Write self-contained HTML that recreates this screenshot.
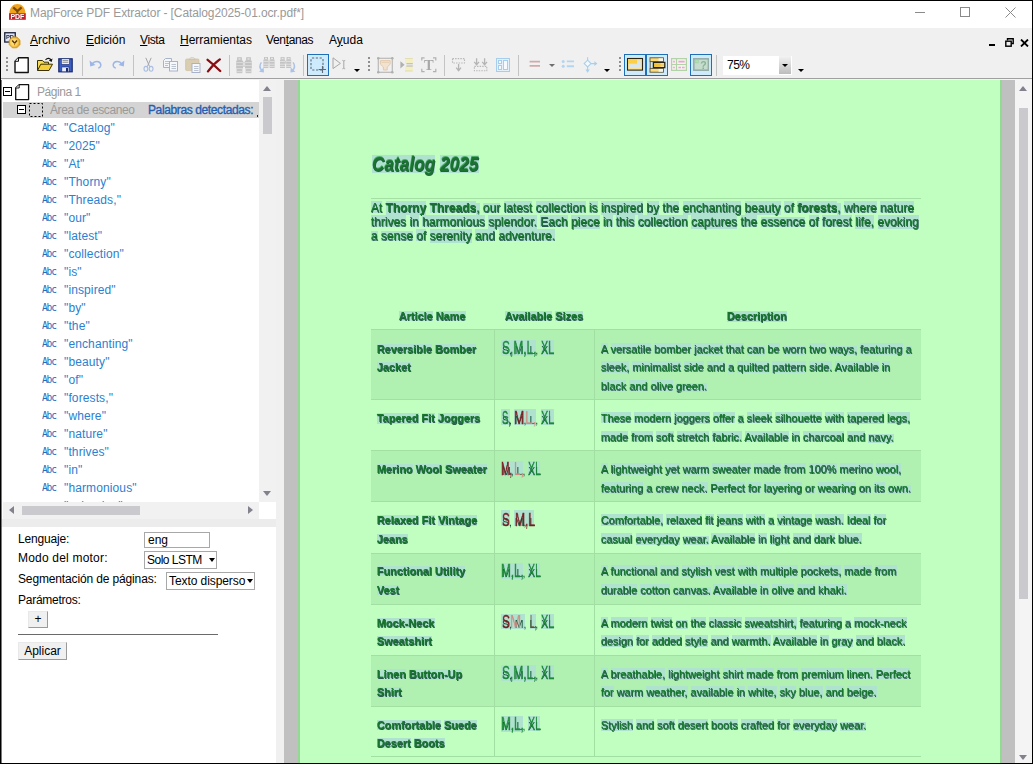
<!DOCTYPE html><html lang="es"><head><meta charset="utf-8"><title>MapForce PDF Extractor</title><style>
*{box-sizing:border-box;margin:0;padding:0}
html,body{width:1033px;height:764px;overflow:hidden;background:#fff}
body{font-family:"Liberation Sans","DejaVu Sans",sans-serif;font-size:12px;color:#000;position:relative}
.abs{position:absolute}
#frame{position:absolute;left:0;top:0;width:1033px;height:764px;border:1px solid #000;z-index:50;pointer-events:none}
#title{position:absolute;left:1px;top:1px;width:1031px;height:27px;background:#fff}
#title .t{position:absolute;left:29px;top:5px;font-size:12px;color:#999;white-space:pre;letter-spacing:-0.11px}
#menu{position:absolute;left:1px;top:28px;width:1031px;height:24px;background:#f0f0f0}
#menu .m{position:absolute;top:5px;font-size:12px;white-space:pre}
#menu u{text-decoration:underline;text-underline-offset:1px}
#tb{position:absolute;left:1px;top:52px;width:1031px;height:26px;background:#f0f0f0}
#tbline{position:absolute;left:1px;top:78px;width:1031px;height:1px;background:#a0a0a0}
#tbline2{position:absolute;left:1px;top:79px;width:1031px;height:1px;background:#f4f4f4}
.sep{position:absolute;top:55px;width:1px;height:21px;background:#c4c4c4}
.grip{position:absolute;top:57px;width:2px;height:16px;background:repeating-linear-gradient(transparent 0 0.5px,#8e8e8e 0.5px 2.2px,transparent 2.2px 4px)}
.btnon{position:absolute;top:54px;height:22px;background:#cdebfc;border:1px solid #1f6fb6}
.ico{position:absolute;will-change:transform}
.dd{position:absolute;width:0;height:0;border-left:3px solid transparent;border-right:3px solid transparent;border-top:3px solid #000}
#tree{position:absolute;left:2px;top:80px;width:257px;height:422px;background:#fff;overflow:hidden}
.row{position:absolute;left:0;height:18px;white-space:pre;font-size:12px;line-height:18px;margin-top:1px}
.w{color:#2b80d0;letter-spacing:0.12px}
#vs{position:absolute;left:259px;top:80px;width:17px;height:422px;background:#f1f1f1}
#hs{position:absolute;left:3px;top:502px;width:256px;height:17px;background:#f1f1f1}
.thumb{position:absolute;background:#c9c9ce}
#corner{position:absolute;left:259px;top:502px;width:17px;height:17px;background:#fff}
#split1{position:absolute;left:2px;top:519px;width:274px;height:8px;background:#ececec}
#props{position:absolute;left:2px;top:527px;width:274px;height:236px;background:#fff}
#props .l{position:absolute;left:16px;font-size:12px;white-space:pre;letter-spacing:0.1px}
.inp{position:absolute;border:1px solid #a8a8a8;background:#fff;font-size:12px;white-space:pre}
.btn{position:absolute;border:1px solid;border-color:#e8e8e8 #9a9a9a #9a9a9a #e8e8e8;background:#f0f0f0;font-size:12px;text-align:center;white-space:pre}
#vsplit{position:absolute;left:276px;top:80px;width:8px;height:683px;background:#f0f0f0}
#view{position:absolute;left:284px;top:80px;width:731px;height:683px;background:#c0c0c0;overflow:hidden}
#page{position:absolute;left:14px;top:0;width:704px;height:683px;background:#c0ffc0;border-left:2px solid #93d893;border-right:2px solid #93d893}
#rvs{position:absolute;left:1015px;top:80px;width:17px;height:683px;background:#f4f4f4}
.arr{position:absolute;width:0;height:0}
</style></head><body>
<div id="title"><svg class="abs" style="left:8px;top:2px;will-change:transform" width="17" height="18" viewBox="0 0 17 18"><path d="M0.4 10.6C0.4 -2.2 16.4 -2.2 16.4 10.6Z" fill="#f0a31c"/><path d="M4.2 4.4L8.4 8L12.6 4.4" fill="none" stroke="#7a4a0a" stroke-width="2.3"/><path d="M8.4 7.4V10.4" stroke="#7a4a0a" stroke-width="1.8"/><rect x="0" y="10.2" width="16.8" height="6.6" fill="#c6222a"/><text x="8.4" y="16.2" text-anchor="middle" font-family="Liberation Sans,sans-serif" font-size="7.4" font-weight="bold" fill="#fff" textLength="14" lengthAdjust="spacingAndGlyphs">PDF</text></svg><span class="t">MapForce PDF Extractor - [Catalog2025-01.ocr.pdf*]</span>
<div class="abs" style="left:914px;top:11px;width:10px;height:1px;background:#8a8a8a"></div>
<div class="abs" style="left:959px;top:6px;width:10px;height:10px;border:1px solid #8a8a8a"></div>
<svg class="abs" style="left:1004px;top:6px" width="11" height="11" viewBox="0 0 11 11"><path d="M0.5 0.5L10.5 10.5M10.5 0.5L0.5 10.5" stroke="#8a8a8a" stroke-width="1" fill="none"/></svg>
</div>
<div id="menu"><svg class="abs" style="left:3px;top:3px;will-change:transform" width="18" height="18" viewBox="0 0 18 18"><defs><radialGradient id="bg1" cx="0.45" cy="0.5" r="0.6"><stop offset="0" stop-color="#fff3b8"/><stop offset="0.55" stop-color="#f9cf58"/><stop offset="1" stop-color="#d68c0c"/></radialGradient></defs><rect x="0.75" y="1.75" width="10.5" height="9.3" fill="#dfe6fb" stroke="#1a2238" stroke-width="1.3"/><text x="2" y="7.6" font-family="Liberation Sans,sans-serif" font-size="5.8" font-weight="bold" fill="#1a2238">PD</text><path d="M8.4 6H12.8L16 9.2V13.6L12.8 16.8H8.4L5.2 13.6V9.2Z" fill="url(#bg1)" stroke="#d4900e" stroke-width="0.8"/><path d="M8.2 9.4L10.6 12.2L13 9.4" fill="none" stroke="#5e3606" stroke-width="1.5"/><path d="M10.6 12V14.2" stroke="#b8780a" stroke-width="1"/></svg>
<span class="m" style="left:29px"><u>A</u>rchivo</span>
<span class="m" style="left:85px"><u>E</u>dición</span>
<span class="m" style="left:139px"><span style="letter-spacing:-0.4px"><u>V</u>ista</span></span>
<span class="m" style="left:179px"><u>H</u>erramientas</span>
<span class="m" style="left:265px"><span style="letter-spacing:-0.35px">Ven<u>t</u>anas</span></span>
<span class="m" style="left:328px">A<u>y</u>uda</span>
<div class="abs" style="left:988px;top:16px;width:6px;height:2px;background:#000"></div>
<svg class="abs" style="left:1004px;top:10px" width="9" height="9" viewBox="0 0 9 9"><path d="M2.5 2.5V0.8H8.2V5.5H6.5" stroke="#000" stroke-width="1.4" fill="none"/><rect x="0.8" y="3.2" width="5.4" height="5" stroke="#000" stroke-width="1.4" fill="none"/></svg>
<svg class="abs" style="left:1019px;top:11px" width="9" height="8" viewBox="0 0 9 8"><path d="M1 0.5L8 7.5M8 0.5L1 7.5" stroke="#000" stroke-width="1.8" fill="none"/></svg>
</div>
<div id="tb"></div><div id="tbline"></div><div id="tbline2"></div>
<div class="grip" style="left:6px"></div>
<div class="grip" style="left:368px"></div>
<div class="grip" style="left:619px"></div>
<div class="sep" style="left:82px"></div>
<div class="sep" style="left:133px"></div>
<div class="sep" style="left:229px"></div>
<div class="sep" style="left:303px"></div>
<div class="sep" style="left:444px"></div>
<div class="sep" style="left:518px"></div>
<div class="sep" style="left:716px"></div>
<div class="btnon" style="left:307px;width:22px"></div>
<div class="btnon" style="left:624px;width:22px"></div>
<div class="btnon" style="left:646px;width:22px"></div>
<div class="btnon" style="left:690px;width:22px"></div>
<svg class="ico" style="left:14px;top:57px" width="16" height="17" viewBox="0 0 16 17"><path d="M4.5 0.8H14.2V15.5H1V4.3Z" fill="#fff" stroke="#111" stroke-width="1.4" stroke-linejoin="round"/><path d="M4.5 0.8V4.3H1" fill="#eee" stroke="#111" stroke-width="1"/></svg>
<svg class="ico" style="left:36px;top:57px" width="18" height="15" viewBox="0 0 18 15"><path d="M1.5 13.5V3.5H6.5L8 5.2H12.5V7" fill="#f6dc55" stroke="#3a3000" stroke-width="1"/><path d="M1.5 13.5L4.8 7.2H16.5L13 13.5Z" fill="#f3cf3a" stroke="#3a3000" stroke-width="1" stroke-linejoin="round"/><path d="M9.5 2.8C11.5 0.6 14.2 1 15.3 3.6" fill="none" stroke="#111" stroke-width="1.1"/><path d="M16.6 1.6L15.7 5L12.8 3.6Z" fill="#111"/></svg>
<svg class="ico" style="left:58px;top:58px" width="15" height="15" viewBox="0 0 15 15"><rect x="0.8" y="0.8" width="13.4" height="13" fill="#3d5fc4" stroke="#1a2a6c" stroke-width="1.2"/><rect x="3.3" y="0.8" width="8.2" height="5.6" fill="#eef0f4" stroke="#1a2a6c" stroke-width="0.6"/><path d="M4.5 2.6H10.3M4.5 4.3H10.3" stroke="#777" stroke-width="0.8"/><rect x="3.8" y="9" width="7.2" height="4.8" fill="#e8eefc" stroke="#1a2a6c" stroke-width="0.6"/><rect x="8" y="10" width="2" height="3.8" fill="#1a2a6c"/></svg>
<svg class="ico" style="left:89px;top:59px" width="14" height="10" viewBox="0 0 14 10"><path d="M3.2 5.2C5.2 1.6 11.2 1.4 11.8 5.6C12.1 7.6 10.6 8.8 9.2 9" fill="none" stroke="#9db6e6" stroke-width="1.5"/><path d="M0.6 1.6L1.2 7.4L6.4 6Z" fill="#9db6e6"/></svg>
<svg class="ico" style="left:111px;top:59px" width="14" height="10" viewBox="0 0 14 10"><path d="M10.8 5.2C8.8 1.6 2.8 1.4 2.2 5.6C1.9 7.6 3.4 8.8 4.8 9" fill="none" stroke="#9db6e6" stroke-width="1.5"/><path d="M13.4 1.6L12.8 7.4L7.6 6Z" fill="#9db6e6"/></svg>
<svg class="ico" style="left:143px;top:57px" width="11" height="16" viewBox="0 0 11 16"><path d="M2.8 0.8L6.6 9.6M8.2 0.8L4.4 9.6" stroke="#a4a4ac" stroke-width="1" fill="none"/><ellipse cx="2.9" cy="11.8" rx="1.9" ry="2.4" fill="none" stroke="#a9bde2" stroke-width="1.1"/><ellipse cx="8.1" cy="11.8" rx="1.9" ry="2.4" fill="none" stroke="#a9bde2" stroke-width="1.1"/></svg>
<svg class="ico" style="left:162px;top:57px" width="17" height="15" viewBox="0 0 17 15"><path d="M1.5 3.5L3.5 1.5H9.5V10.5H1.5Z" fill="#f4f6fa" stroke="#a8b2c8" stroke-width="1"/><path d="M3 4.5H8M3 6.5H8M3 8.5H6" stroke="#bcc3d0" stroke-width="1"/><rect x="7.5" y="4.5" width="8" height="9.5" fill="#f6f8fb" stroke="#a8b2c8" stroke-width="1"/><path d="M9.5 7.5H14M9.5 9.5H14M9.5 11.5H14" stroke="#bcc3d0" stroke-width="1"/></svg>
<svg class="ico" style="left:185px;top:57px" width="16" height="16" viewBox="0 0 16 16"><rect x="0.6" y="2" width="13.4" height="11.6" rx="1.2" fill="#d9cdb2" stroke="#cfc3a6" stroke-width="0.8"/><path d="M4.4 2.6C4.4 0 10 0 10 2.6Z" fill="#e6e2d8" stroke="#c4bca8" stroke-width="0.7"/><rect x="7" y="6.5" width="8" height="9" fill="#f6f8fb" stroke="#a8b2c8" stroke-width="1"/><path d="M9 9.5H13.5M9 11.5H13.5M9 13.5H13.5" stroke="#bcc3d0" stroke-width="1"/></svg>
<svg class="ico" style="left:206px;top:58px" width="16" height="15" viewBox="0 0 16 15"><path d="M1.6 1.8C5 4.4 10.4 9.2 14.2 13M13.8 1.4C9.8 4.2 5 9.4 2 13.4" stroke="#8a0c12" stroke-width="2.3" fill="none" stroke-linecap="round"/></svg>
<svg class="ico" style="left:236px;top:57px" width="16" height="17" viewBox="0 0 16 17"><rect x="1.2" y="0.3" width="4.6" height="3.6" fill="#bdbdbd"/><rect x="10.2" y="0.3" width="4.6" height="3.6" fill="#bdbdbd"/><rect x="2.4" y="1.2" width="2.2" height="1.6" fill="#e4e4e4"/><rect x="11.4" y="1.2" width="2.2" height="1.6" fill="#e4e4e4"/><rect x="0.2" y="3.6" width="6.8" height="7.6" fill="#c2c2c2"/><rect x="9" y="3.6" width="6.8" height="7.6" fill="#c2c2c2"/><rect x="6.6" y="4.8" width="2.8" height="5" fill="#cdcdcd"/><rect x="7.4" y="5.6" width="1.2" height="3.2" fill="#ececec"/><rect x="0.6" y="11.2" width="5.8" height="5" fill="#c6c6c6"/><rect x="9.6" y="11.2" width="5.8" height="5" fill="#c6c6c6"/><path d="M0.2 5.6H7M9 5.6H15.8M0.2 8.6H7M9 8.6H15.8M0.6 11.4H6.4M9.6 11.4H15.4M0.6 14.6H6.4M9.6 14.6H15.4" stroke="#dedede" stroke-width="0.9"/></svg>
<svg class="ico" style="left:257px;top:56px" width="18" height="17" viewBox="0 0 18 17"><g transform="translate(6.2 0.8)"><rect x="0.8" y="0.3" width="4" height="2.6" fill="#c0c0c0"/><rect x="6.8" y="0.3" width="4" height="2.6" fill="#c0c0c0"/><rect x="1.8" y="1" width="2" height="1.2" fill="#e6e6e6"/><rect x="7.8" y="1" width="2" height="1.2" fill="#e6e6e6"/><rect x="0.2" y="2.8" width="5" height="8.4" fill="#c4c4c4"/><rect x="6.4" y="2.8" width="5" height="8.4" fill="#c4c4c4"/><rect x="5" y="4" width="1.6" height="3" fill="#d0d0d0"/><path d="M0.2 4.6H5.2M6.4 4.6H11.4M0.2 7.4H5.2M6.4 7.4H11.4M0.2 9.6H5.2M6.4 9.6H11.4" stroke="#e4e4e4" stroke-width="0.9"/></g><path d="M4.4 6.4C2.4 9 2.6 12 4.8 14.6" fill="none" stroke="#a9c3ea" stroke-width="1.5"/><path d="M2 15.8L7 16.4L6.6 11.6Z" fill="#a9c3ea"/></svg>
<svg class="ico" style="left:279px;top:56px" width="19" height="17" viewBox="0 0 19 17"><g transform="translate(0.8 0.8)"><rect x="0.8" y="0.3" width="4" height="2.6" fill="#c0c0c0"/><rect x="6.8" y="0.3" width="4" height="2.6" fill="#c0c0c0"/><rect x="1.8" y="1" width="2" height="1.2" fill="#e6e6e6"/><rect x="7.8" y="1" width="2" height="1.2" fill="#e6e6e6"/><rect x="0.2" y="2.8" width="5" height="8.4" fill="#c4c4c4"/><rect x="6.4" y="2.8" width="5" height="8.4" fill="#c4c4c4"/><rect x="5" y="4" width="1.6" height="3" fill="#d0d0d0"/><path d="M0.2 4.6H5.2M6.4 4.6H11.4M0.2 7.4H5.2M6.4 7.4H11.4M0.2 9.6H5.2M6.4 9.6H11.4" stroke="#e4e4e4" stroke-width="0.9"/></g><path d="M14 6.4C16 9 15.8 12 13.6 14.6" fill="none" stroke="#a9c3ea" stroke-width="1.5"/><path d="M16.4 15.8L11.4 16.4L11.8 11.6Z" fill="#a9c3ea"/></svg>
<svg class="ico" style="left:310px;top:57px" width="17" height="17" viewBox="0 0 17 17"><rect x="1" y="1" width="12" height="12" rx="1" fill="none" stroke="#5d6b78" stroke-width="1.1" stroke-dasharray="2.2 1.6"/><path d="M12.5 9V16M8.6 12.5H16" stroke="#5d6b78" stroke-width="1.1"/></svg>
<svg class="ico" style="left:332px;top:57px" width="15" height="14" viewBox="0 0 15 14"><path d="M1 0.8L8.4 6.4L1 11.6Z" fill="none" stroke="#a6a6a6" stroke-width="1"/><path d="M10.4 3.4C11.4 3.4 11.8 3.8 11.8 4.6V10.6C11.8 11.4 11.4 11.8 10.4 11.8M13.2 3.4C12.2 3.4 11.8 3.8 11.8 4.6M13.2 11.8C12.2 11.8 11.8 11.4 11.8 10.6" stroke="#a6a6a6" stroke-width="1" fill="none"/></svg>
<svg class="ico" style="left:377px;top:57px" width="17" height="17" viewBox="0 0 17 17"><rect x="1.3" y="1.3" width="14" height="14" fill="none" stroke="#b8b8b8" stroke-width="1.2"/><circle cx="1.3" cy="1.3" r="1.3" fill="#b0b0b0"/><circle cx="15.3" cy="1.3" r="1.3" fill="#b0b0b0"/><circle cx="1.3" cy="15.3" r="1.3" fill="#b0b0b0"/><circle cx="15.3" cy="15.3" r="1.3" fill="#b0b0b0"/><path d="M3.4 3.6H13.2V7.2L10.2 10V13H6.4V10L3.4 7.2Z" fill="#f3e2d0" stroke="#e0c6a8" stroke-width="0.9"/><path d="M4.6 5.4H12" stroke="#e6cfb4" stroke-width="1"/></svg>
<svg class="ico" style="left:400px;top:58px" width="14" height="14" viewBox="0 0 14 14"><path d="M0.4 3.2L4.6 6.8L0.4 10.4Z" fill="#b0b0b0"/><rect x="5" y="0.4" width="7.8" height="5.2" fill="#f4efc2"/><rect x="5" y="8" width="7.8" height="5" fill="#f4efc2"/><path d="M6.4 5.7H12.8M6.4 8H12.8" stroke="#b4b4b4" stroke-width="1.1"/><path d="M5 0.4H12.8M5 13H12.8" stroke="#dcd6a6" stroke-width="0.8"/></svg>
<svg class="ico" style="left:421px;top:57px" width="16" height="16" viewBox="0 0 16 16"><path d="M3.6 0.8H0.8V3.6M12 0.8H14.8V3.6M0.8 11.8V14.6H3.6M14.8 11.8V14.6H12" stroke="#b0b0b0" stroke-width="1.2" fill="none"/><text x="7.8" y="12.8" text-anchor="middle" font-family="Liberation Serif,serif" font-size="14.5" font-weight="bold" fill="#a9a9a9">T</text></svg>
<svg class="ico" style="left:451px;top:58px" width="15" height="14" viewBox="0 0 15 14"><rect x="1.5" y="0.6" width="12" height="4.4" fill="none" stroke="#b8b8b8" stroke-width="1.1" stroke-dasharray="1.5 1.1"/><path d="M7.6 6V12.4M5.2 9.6L7.6 12.6L10 9.6" stroke="#b4b4b4" stroke-width="1.3" fill="none"/></svg>
<svg class="ico" style="left:473px;top:58px" width="15" height="14" viewBox="0 0 15 14"><path d="M3.6 0.2V6.6M1.2 3.8L3.6 6.8L6 3.8M11.6 0.2V6.6M9.2 3.8L11.6 6.8L14 3.8" stroke="#b4b4b4" stroke-width="1.3" fill="none"/><rect x="1.4" y="8.4" width="12.4" height="4.4" fill="none" stroke="#b8b8b8" stroke-width="1.1" stroke-dasharray="1.5 1.1"/></svg>
<svg class="ico" style="left:495px;top:58px" width="16" height="15" viewBox="0 0 16 15"><rect x="1.5" y="0.5" width="13" height="13" fill="#e4f1fb" stroke="#a6cdec" stroke-width="1"/><rect x="3.5" y="2.5" width="3" height="3" fill="#f6fafe" stroke="#a6cdec" stroke-width="1"/><rect x="3.5" y="7.5" width="3" height="4" fill="#f6fafe" stroke="#a6cdec" stroke-width="1"/><rect x="8.5" y="2.5" width="4" height="9" fill="#f6fafe" stroke="#a6cdec" stroke-width="1"/></svg>
<svg class="ico" style="left:528px;top:59px" width="13" height="9" viewBox="0 0 13 9"><path d="M1.6 2.6H12M1.6 6.9H12" stroke="#d2a9a9" stroke-width="1.9"/></svg>
<svg class="ico" style="left:561px;top:59px" width="14" height="10" viewBox="0 0 14 10"><circle cx="2.2" cy="2.4" r="1.5" fill="#b2d5f1"/><circle cx="2.2" cy="7.2" r="1.5" fill="#b2d5f1"/><path d="M5.8 2.4H13M5.8 7.2H13" stroke="#b2d5f1" stroke-width="1.9"/></svg>
<svg class="ico" style="left:583px;top:57px" width="16" height="17" viewBox="0 0 16 17"><path d="M4.6 3.2L8 6.6L4.6 10L1.2 6.6Z" fill="#f4f9fd" stroke="#a9cfea" stroke-width="1.1"/><path d="M4.6 0.2V3.2M8 6.6H12.4M4.6 10V13.6" stroke="#a9cfea" stroke-width="1.1"/><path d="M11.4 4.2L14.4 6.6L11.4 9Z" fill="#a9cfea"/><path d="M2.4 12.6L4.6 15.8L6.8 12.6Z" fill="#a9cfea"/></svg>
<svg class="ico" style="left:626px;top:57px" width="18" height="14" viewBox="0 0 18 14"><rect x="1.5" y="1.5" width="15" height="11.6" fill="#fbe196" stroke="#2a2410" stroke-width="1.1"/><rect x="2.2" y="2.2" width="8.8" height="4.4" fill="#fbd046"/><path d="M11.6 3.6H14.6V11H4V7.2H11.6Z" fill="#d6e6f5"/></svg>
<svg class="ico" style="left:649px;top:57px" width="17" height="16" viewBox="0 0 17 16"><rect x="1" y="0.8" width="13.4" height="3.8" fill="#fbdc78" stroke="#5a5238" stroke-width="0.9"/><rect x="9.6" y="1.3" width="4.4" height="2.8" fill="#f6f4ee"/><rect x="1" y="11.4" width="13.4" height="3.8" fill="#fbdc78" stroke="#5a5238" stroke-width="0.9"/><rect x="9.6" y="11.9" width="4.4" height="2.8" fill="#f6f4ee"/><path d="M1.2 4.8V11.2" stroke="#5a5238" stroke-width="0.9"/><rect x="4.4" y="5.4" width="11.4" height="5.2" fill="#f9cf4a" stroke="#2a2414" stroke-width="1.3"/><rect x="11.6" y="6.2" width="3.4" height="3.6" fill="#f3e3b0"/><path d="M5 8H15.2" stroke="#e2ae2a" stroke-width="0.8"/></svg>
<svg class="ico" style="left:671px;top:58px" width="16" height="13" viewBox="0 0 16 13"><rect x="0.6" y="0.6" width="14.8" height="11.8" fill="#f8f0f2" stroke="#b2d2a8" stroke-width="1.2"/><path d="M0.6 6.5H15.4M5.5 0.6V12.4" stroke="#b2d2a8" stroke-width="1.2"/><path d="M2.2 3.6H3.8M7.4 3.6H13.6M2.2 9.5H3.8M7.4 9.5H10M11 9.5H13.6" stroke="#e8a6d0" stroke-width="1.7"/></svg>
<svg class="ico" style="left:693px;top:58px" width="16" height="13" viewBox="0 0 16 13"><rect x="0.8" y="0.8" width="14.6" height="11.4" fill="#c6dccd" stroke="#94aeaa" stroke-width="1.6"/><rect x="2" y="1.9" width="3.2" height="3" fill="#b0e2ac" stroke="#9cc89c" stroke-width="0.5"/><text x="7.2" y="11" font-family="Liberation Sans,sans-serif" font-size="10.5" font-weight="bold" fill="#86b498">?</text></svg>
<div class="dd" style="left:354px;top:69px;border-top-color:#000"></div>
<div class="dd" style="left:604px;top:69px;border-top-color:#000"></div>
<div class="dd" style="left:798px;top:69px;border-top-color:#000"></div>
<div class="dd" style="left:549px;top:64px;border-top-color:#6e6e6e"></div>
<div class="abs" style="left:723px;top:56px;width:69px;height:19px;background:#fff"></div>
<span class="abs" style="left:727px;top:58px;font-size:12px;white-space:pre;letter-spacing:-0.5px">75%</span>
<div class="abs" style="left:779px;top:56px;width:12px;height:18px;background:linear-gradient(#f3f3f3,#bcbcbc)"></div><div class="dd" style="left:782px;top:64px"></div>
<div id="tree">
<div class="abs" style="left:1px;top:22px;width:256px;height:16px;background:#d4d4d4"></div>
<svg class="abs" style="left:1px;top:7px" width="9" height="9" viewBox="0 0 9 9"><rect x="0.5" y="0.5" width="8" height="8" fill="#fff" stroke="#000"/><path d="M2 4.5H7" stroke="#000"/></svg>
<svg class="abs" style="left:13px;top:4px" width="15" height="17" viewBox="0 0 15 17"><path d="M4.2 0.7H13.6V15.6H0.7V4Z" fill="#fff" stroke="#111" stroke-width="1.3" stroke-linejoin="round"/><path d="M4.2 0.7V4H0.7" fill="#eee" stroke="#111" stroke-width="0.9"/></svg>
<span class="row" style="left:35px;top:2px;color:#9a9a9a;letter-spacing:-0.45px">Página 1</span>
<svg class="abs" style="left:15px;top:25px" width="9" height="9" viewBox="0 0 9 9"><rect x="0.5" y="0.5" width="8" height="8" fill="#fff" stroke="#000"/><path d="M2 4.5H7" stroke="#000"/></svg>
<svg class="abs" style="left:27px;top:23px" width="14" height="14" viewBox="0 0 14 14"><rect x="0.5" y="0.5" width="13" height="13" fill="none" stroke="#000" stroke-dasharray="2 2"/></svg>
<span class="row" style="left:48px;top:20px;color:#9a9a9a;letter-spacing:-0.42px">Área de escaneo</span>
<span class="row" style="left:146px;top:20px;color:#1f5fb4;letter-spacing:-0.38px;-webkit-text-stroke:0.35px #1f5fb4">Palabras detectadas:</span>
<div class="abs" style="left:255px;top:35px;width:1px;height:2px;background:#222"></div>
<span class="abs" style="left:40px;top:43px;font-family:'DejaVu Sans Mono','Liberation Mono',monospace;font-size:9.5px;line-height:9px;color:#2668b8;letter-spacing:-1.1px;transform:scaleY(1.05);transform-origin:0 0">Abc</span>
<span class="row w" style="left:62px;top:38px">&quot;Catalog&quot;</span>
<span class="abs" style="left:40px;top:61px;font-family:'DejaVu Sans Mono','Liberation Mono',monospace;font-size:9.5px;line-height:9px;color:#2668b8;letter-spacing:-1.1px;transform:scaleY(1.05);transform-origin:0 0">Abc</span>
<span class="row w" style="left:62px;top:56px">&quot;2025&quot;</span>
<span class="abs" style="left:40px;top:79px;font-family:'DejaVu Sans Mono','Liberation Mono',monospace;font-size:9.5px;line-height:9px;color:#2668b8;letter-spacing:-1.1px;transform:scaleY(1.05);transform-origin:0 0">Abc</span>
<span class="row w" style="left:62px;top:74px">&quot;At&quot;</span>
<span class="abs" style="left:40px;top:97px;font-family:'DejaVu Sans Mono','Liberation Mono',monospace;font-size:9.5px;line-height:9px;color:#2668b8;letter-spacing:-1.1px;transform:scaleY(1.05);transform-origin:0 0">Abc</span>
<span class="row w" style="left:62px;top:92px">&quot;Thorny&quot;</span>
<span class="abs" style="left:40px;top:115px;font-family:'DejaVu Sans Mono','Liberation Mono',monospace;font-size:9.5px;line-height:9px;color:#2668b8;letter-spacing:-1.1px;transform:scaleY(1.05);transform-origin:0 0">Abc</span>
<span class="row w" style="left:62px;top:110px">&quot;Threads,&quot;</span>
<span class="abs" style="left:40px;top:133px;font-family:'DejaVu Sans Mono','Liberation Mono',monospace;font-size:9.5px;line-height:9px;color:#2668b8;letter-spacing:-1.1px;transform:scaleY(1.05);transform-origin:0 0">Abc</span>
<span class="row w" style="left:62px;top:128px">&quot;our&quot;</span>
<span class="abs" style="left:40px;top:151px;font-family:'DejaVu Sans Mono','Liberation Mono',monospace;font-size:9.5px;line-height:9px;color:#2668b8;letter-spacing:-1.1px;transform:scaleY(1.05);transform-origin:0 0">Abc</span>
<span class="row w" style="left:62px;top:146px">&quot;latest&quot;</span>
<span class="abs" style="left:40px;top:169px;font-family:'DejaVu Sans Mono','Liberation Mono',monospace;font-size:9.5px;line-height:9px;color:#2668b8;letter-spacing:-1.1px;transform:scaleY(1.05);transform-origin:0 0">Abc</span>
<span class="row w" style="left:62px;top:164px">&quot;collection&quot;</span>
<span class="abs" style="left:40px;top:187px;font-family:'DejaVu Sans Mono','Liberation Mono',monospace;font-size:9.5px;line-height:9px;color:#2668b8;letter-spacing:-1.1px;transform:scaleY(1.05);transform-origin:0 0">Abc</span>
<span class="row w" style="left:62px;top:182px">&quot;is&quot;</span>
<span class="abs" style="left:40px;top:205px;font-family:'DejaVu Sans Mono','Liberation Mono',monospace;font-size:9.5px;line-height:9px;color:#2668b8;letter-spacing:-1.1px;transform:scaleY(1.05);transform-origin:0 0">Abc</span>
<span class="row w" style="left:62px;top:200px">&quot;inspired&quot;</span>
<span class="abs" style="left:40px;top:223px;font-family:'DejaVu Sans Mono','Liberation Mono',monospace;font-size:9.5px;line-height:9px;color:#2668b8;letter-spacing:-1.1px;transform:scaleY(1.05);transform-origin:0 0">Abc</span>
<span class="row w" style="left:62px;top:218px">&quot;by&quot;</span>
<span class="abs" style="left:40px;top:241px;font-family:'DejaVu Sans Mono','Liberation Mono',monospace;font-size:9.5px;line-height:9px;color:#2668b8;letter-spacing:-1.1px;transform:scaleY(1.05);transform-origin:0 0">Abc</span>
<span class="row w" style="left:62px;top:236px">&quot;the&quot;</span>
<span class="abs" style="left:40px;top:259px;font-family:'DejaVu Sans Mono','Liberation Mono',monospace;font-size:9.5px;line-height:9px;color:#2668b8;letter-spacing:-1.1px;transform:scaleY(1.05);transform-origin:0 0">Abc</span>
<span class="row w" style="left:62px;top:254px">&quot;enchanting&quot;</span>
<span class="abs" style="left:40px;top:277px;font-family:'DejaVu Sans Mono','Liberation Mono',monospace;font-size:9.5px;line-height:9px;color:#2668b8;letter-spacing:-1.1px;transform:scaleY(1.05);transform-origin:0 0">Abc</span>
<span class="row w" style="left:62px;top:272px">&quot;beauty&quot;</span>
<span class="abs" style="left:40px;top:295px;font-family:'DejaVu Sans Mono','Liberation Mono',monospace;font-size:9.5px;line-height:9px;color:#2668b8;letter-spacing:-1.1px;transform:scaleY(1.05);transform-origin:0 0">Abc</span>
<span class="row w" style="left:62px;top:290px">&quot;of&quot;</span>
<span class="abs" style="left:40px;top:313px;font-family:'DejaVu Sans Mono','Liberation Mono',monospace;font-size:9.5px;line-height:9px;color:#2668b8;letter-spacing:-1.1px;transform:scaleY(1.05);transform-origin:0 0">Abc</span>
<span class="row w" style="left:62px;top:308px">&quot;forests,&quot;</span>
<span class="abs" style="left:40px;top:331px;font-family:'DejaVu Sans Mono','Liberation Mono',monospace;font-size:9.5px;line-height:9px;color:#2668b8;letter-spacing:-1.1px;transform:scaleY(1.05);transform-origin:0 0">Abc</span>
<span class="row w" style="left:62px;top:326px">&quot;where&quot;</span>
<span class="abs" style="left:40px;top:349px;font-family:'DejaVu Sans Mono','Liberation Mono',monospace;font-size:9.5px;line-height:9px;color:#2668b8;letter-spacing:-1.1px;transform:scaleY(1.05);transform-origin:0 0">Abc</span>
<span class="row w" style="left:62px;top:344px">&quot;nature&quot;</span>
<span class="abs" style="left:40px;top:367px;font-family:'DejaVu Sans Mono','Liberation Mono',monospace;font-size:9.5px;line-height:9px;color:#2668b8;letter-spacing:-1.1px;transform:scaleY(1.05);transform-origin:0 0">Abc</span>
<span class="row w" style="left:62px;top:362px">&quot;thrives&quot;</span>
<span class="abs" style="left:40px;top:385px;font-family:'DejaVu Sans Mono','Liberation Mono',monospace;font-size:9.5px;line-height:9px;color:#2668b8;letter-spacing:-1.1px;transform:scaleY(1.05);transform-origin:0 0">Abc</span>
<span class="row w" style="left:62px;top:380px">&quot;in&quot;</span>
<span class="abs" style="left:40px;top:403px;font-family:'DejaVu Sans Mono','Liberation Mono',monospace;font-size:9.5px;line-height:9px;color:#2668b8;letter-spacing:-1.1px;transform:scaleY(1.05);transform-origin:0 0">Abc</span>
<span class="row w" style="left:62px;top:398px">&quot;harmonious&quot;</span>
<span class="row w" style="left:62px;top:416px">&quot;splendor.&quot;</span>
</div>
<div id="vs"><div class="thumb" style="left:4px;top:17px;width:9px;height:37px"></div>
<div class="arr" style="left:4px;top:6px;border-left:4.6px solid transparent;border-right:4.6px solid transparent;border-bottom:5.2px solid #82828e"></div>
<div class="arr" style="left:4px;top:411px;border-left:4.6px solid transparent;border-right:4.6px solid transparent;border-top:5.2px solid #82828e"></div></div>
<div id="hs"><div class="thumb" style="left:19px;top:4px;width:118px;height:9px"></div>
<div class="arr" style="left:6px;top:4px;border-top:4.6px solid transparent;border-bottom:4.6px solid transparent;border-right:5.2px solid #82828e"></div>
<div class="arr" style="left:245px;top:4px;border-top:4.6px solid transparent;border-bottom:4.6px solid transparent;border-left:5.2px solid #82828e"></div></div>
<div id="corner"></div><div id="split1"></div>
<div id="props">
<span class="l" style="top:5px;letter-spacing:-0.17px">Lenguaje:</span>
<span class="l" style="top:24px;letter-spacing:0.2px">Modo del motor:</span>
<span class="l" style="top:45px;letter-spacing:-0.14px">Segmentación de páginas:</span>
<span class="l" style="top:66px;letter-spacing:-0.25px">Parámetros:</span>
<div class="inp" style="left:142px;top:5px;width:66px;height:16px;padding:0 3px;line-height:14px">eng</div>
<div class="inp" style="left:142px;top:24px;width:73px;height:18px;padding:0 2px;line-height:16px;letter-spacing:-0.5px">Solo LSTM<div class="dd" style="left:64px;top:6px;border-width:4px 3.5px 0 3.5px"></div></div>
<div class="inp" style="left:164px;top:45px;width:89px;height:18px;padding:0 2px;line-height:16px;letter-spacing:-0.08px">Texto disperso<div class="dd" style="left:80px;top:6px;border-width:4px 3.5px 0 3.5px"></div></div>
<div class="btn" style="left:26px;top:84px;width:20px;height:17px;line-height:14px">+</div>
<div class="abs" style="left:16px;top:107px;width:200px;height:1px;background:#6a6a6a"></div>
<div class="btn" style="left:16px;top:115px;width:49px;height:18px;line-height:16px">Aplicar</div>
</div>
<div id="vsplit"></div>
<div id="view"><div id="page">
<style>.ln{position:absolute;white-space:pre;color:#1a7430;text-shadow:0.5px 0.55px 0.4px rgba(6,56,44,.8),-0.35px -0.45px 0.3px rgba(38,150,60,.7);will-change:transform}.ln b{font-weight:bold}.ttl{font-weight:bold;font-style:italic}.h{background:linear-gradient(#b0e2d0,#b0e2d0) no-repeat}.ov{position:absolute;white-space:pre;transform-origin:0 0;will-change:transform}.orig{color:#14553c;text-shadow:none}.orig .h{background:none}</style>
<div class="abs" style="left:71.0px;top:118.0px;width:549.5px;height:1.0px;background:#a4dfa4"></div>
<div class="ln ttl" style="left:72.4px;top:76.2px;font-size:17.3px;line-height:19.32px;transform:scaleY(1.14);transform-origin:0 81%"><span class="h" style="background-size:100% 15.9px;background-position:0 2.2px">Catalog</span> <span class="h" style="background-size:100% 15.9px;background-position:0 2.2px">2025</span></div>
<div class="ln " style="left:71.3px;top:121.5px;font-size:12px;line-height:13.40px;"><span class="h" style="background-size:100% 12.7px;background-position:0 -0.6px">At</span> <b><span class="h" style="background-size:100% 14.7px;background-position:0 -0.6px">Thorny</span> <span class="h" style="background-size:100% 12.7px;background-position:0 -0.6px">Threads</span></b><span class="h" style="background-size:100% 12.3px;background-position:0 1.8px">,</span> <span class="h" style="background-size:100% 10.3px;background-position:0 1.8px">our</span> <span class="h" style="background-size:100% 12.7px;background-position:0 -0.6px">latest</span> <span class="h" style="background-size:100% 12.7px;background-position:0 -0.6px">collection</span> <span class="h" style="background-size:100% 12.7px;background-position:0 -0.6px">is</span> <span class="h" style="background-size:100% 14.7px;background-position:0 -0.6px">inspired</span> <span class="h" style="background-size:100% 14.7px;background-position:0 -0.6px">by</span> <span class="h" style="background-size:100% 12.7px;background-position:0 -0.6px">the</span> <span class="h" style="background-size:100% 14.7px;background-position:0 -0.6px">enchanting</span> <span class="h" style="background-size:100% 14.7px;background-position:0 -0.6px">beauty</span> <span class="h" style="background-size:100% 12.7px;background-position:0 -0.6px">of</span> <b><span class="h" style="background-size:100% 12.7px;background-position:0 -0.6px">forests</span></b><span class="h" style="background-size:100% 12.3px;background-position:0 1.8px">,</span> <span class="h" style="background-size:100% 12.7px;background-position:0 -0.6px">where</span> <span class="h" style="background-size:100% 12.7px;background-position:0 -0.6px">nature</span></div>
<div class="ln " style="left:71.3px;top:135.6px;font-size:12px;line-height:13.40px;"><span class="h" style="background-size:100% 12.7px;background-position:0 -0.6px">thrives</span> <span class="h" style="background-size:100% 12.7px;background-position:0 -0.6px">in</span> <span class="h" style="background-size:100% 12.7px;background-position:0 -0.6px">harmonious</span> <span class="h" style="background-size:100% 14.7px;background-position:0 -0.6px">splendor.</span> <span class="h" style="background-size:100% 12.7px;background-position:0 -0.6px">Each</span> <span class="h" style="background-size:100% 14.7px;background-position:0 -0.6px">piece</span> <span class="h" style="background-size:100% 12.7px;background-position:0 -0.6px">in</span> <span class="h" style="background-size:100% 12.7px;background-position:0 -0.6px">this</span> <span class="h" style="background-size:100% 12.7px;background-position:0 -0.6px">collection</span> <span class="h" style="background-size:100% 14.7px;background-position:0 -0.6px">captures</span> <span class="h" style="background-size:100% 12.7px;background-position:0 -0.6px">the</span> <span class="h" style="background-size:100% 10.3px;background-position:0 1.8px">essence</span> <span class="h" style="background-size:100% 12.7px;background-position:0 -0.6px">of</span> <span class="h" style="background-size:100% 12.7px;background-position:0 -0.6px">forest</span> <span class="h" style="background-size:100% 14.7px;background-position:0 -0.6px">life,</span> <span class="h" style="background-size:100% 14.7px;background-position:0 -0.6px">evoking</span></div>
<div class="ln " style="left:71.3px;top:149.7px;font-size:12px;line-height:13.40px;"><span class="h" style="background-size:100% 10.3px;background-position:0 1.8px">a</span> <span class="h" style="background-size:100% 10.3px;background-position:0 1.8px">sense</span> <span class="h" style="background-size:100% 12.7px;background-position:0 -0.6px">of</span> <span class="h" style="background-size:100% 14.7px;background-position:0 -0.6px">serenity</span> <span class="h" style="background-size:100% 12.7px;background-position:0 -0.6px">and</span> <span class="h" style="background-size:100% 12.7px;background-position:0 -0.6px">adventure.</span></div>
<div class="abs" style="left:71.0px;top:249.0px;width:549.5px;height:70.7px;background:#b0f0b0"></div>
<div class="abs" style="left:71.0px;top:370.8px;width:549.5px;height:51.1px;background:#b0f0b0"></div>
<div class="abs" style="left:71.0px;top:473.0px;width:549.5px;height:51.1px;background:#b0f0b0"></div>
<div class="abs" style="left:71.0px;top:575.2px;width:549.5px;height:51.1px;background:#b0f0b0"></div>
<div class="abs" style="left:71.0px;top:248.5px;width:549.5px;height:1.0px;background:#a2dfa2"></div>
<div class="abs" style="left:71.0px;top:319.2px;width:549.5px;height:1.0px;background:#a2dfa2"></div>
<div class="abs" style="left:71.0px;top:370.3px;width:549.5px;height:1.0px;background:#a2dfa2"></div>
<div class="abs" style="left:71.0px;top:421.4px;width:549.5px;height:1.0px;background:#a2dfa2"></div>
<div class="abs" style="left:71.0px;top:472.5px;width:549.5px;height:1.0px;background:#a2dfa2"></div>
<div class="abs" style="left:71.0px;top:523.6px;width:549.5px;height:1.0px;background:#a2dfa2"></div>
<div class="abs" style="left:71.0px;top:574.7px;width:549.5px;height:1.0px;background:#a2dfa2"></div>
<div class="abs" style="left:71.0px;top:625.8px;width:549.5px;height:1.0px;background:#a2dfa2"></div>
<div class="abs" style="left:71.0px;top:675.9px;width:549.5px;height:1.0px;background:#a2dfa2"></div>
<div class="abs" style="left:193.8px;top:249.0px;width:1.0px;height:427.4px;background:#a2dfa2"></div>
<div class="abs" style="left:294.0px;top:249.0px;width:1.0px;height:427.4px;background:#a2dfa2"></div>
<div class="ln " style="left:99.4px;top:230.3px;font-size:10.9px;line-height:12.18px;"><b><span class="h" style="background-size:100% 9.9px;background-position:0 0.9px">Article</span> <span class="h" style="background-size:100% 9.9px;background-position:0 0.9px">Name</span></b></div>
<div class="ln " style="left:205.0px;top:230.3px;font-size:10.9px;line-height:12.18px;"><b><span class="h" style="background-size:100% 9.9px;background-position:0 0.9px">Available</span> <span class="h" style="background-size:100% 9.9px;background-position:0 0.9px">Sizes</span></b></div>
<div class="ln " style="left:427.3px;top:230.3px;font-size:10.9px;line-height:12.18px;"><b><span class="h" style="background-size:100% 11.7px;background-position:0 0.9px">Description</span></b></div>
<div class="ln " style="left:77.0px;top:262.6px;font-size:10.9px;line-height:12.18px;"><b><span class="h" style="background-size:100% 9.9px;background-position:0 0.9px">Reversible</span> <span class="h" style="background-size:100% 9.9px;background-position:0 0.9px">Bomber</span></b></div>
<div class="ln " style="left:77.0px;top:281.3px;font-size:10.9px;line-height:12.18px;"><b><span class="h" style="background-size:100% 9.9px;background-position:0 0.9px">Jacket</span></b></div>
<div class="ln " style="left:301.4px;top:262.6px;font-size:10.9px;line-height:12.18px;"><span class="h" style="background-size:100% 11.3px;background-position:0 0.3px">A</span> <span class="h" style="background-size:100% 11.3px;background-position:0 0.3px">versatile</span> <span class="h" style="background-size:100% 11.3px;background-position:0 0.3px">bomber</span> <span class="h" style="background-size:100% 13.1px;background-position:0 0.3px">jacket</span> <span class="h" style="background-size:100% 11.3px;background-position:0 0.3px">that</span> <span class="h" style="background-size:100% 9.1px;background-position:0 2.5px">can</span> <span class="h" style="background-size:100% 11.3px;background-position:0 0.3px">be</span> <span class="h" style="background-size:100% 9.1px;background-position:0 2.5px">worn</span> <span class="h" style="background-size:100% 11.3px;background-position:0 0.3px">two</span> <span class="h" style="background-size:100% 10.9px;background-position:0 2.5px">ways,</span> <span class="h" style="background-size:100% 13.1px;background-position:0 0.3px">featuring</span> <span class="h" style="background-size:100% 9.1px;background-position:0 2.5px">a</span></div>
<div class="ln " style="left:301.4px;top:281.3px;font-size:10.9px;line-height:12.18px;"><span class="h" style="background-size:100% 13.1px;background-position:0 0.3px">sleek,</span> <span class="h" style="background-size:100% 11.3px;background-position:0 0.3px">minimalist</span> <span class="h" style="background-size:100% 11.3px;background-position:0 0.3px">side</span> <span class="h" style="background-size:100% 11.3px;background-position:0 0.3px">and</span> <span class="h" style="background-size:100% 9.1px;background-position:0 2.5px">a</span> <span class="h" style="background-size:100% 13.1px;background-position:0 0.3px">quilted</span> <span class="h" style="background-size:100% 13.1px;background-position:0 0.3px">pattern</span> <span class="h" style="background-size:100% 11.3px;background-position:0 0.3px">side.</span> <span class="h" style="background-size:100% 11.3px;background-position:0 0.3px">Available</span> <span class="h" style="background-size:100% 11.3px;background-position:0 0.3px">in</span></div>
<div class="ln " style="left:301.4px;top:300.0px;font-size:10.9px;line-height:12.18px;"><span class="h" style="background-size:100% 11.3px;background-position:0 0.3px">black</span> <span class="h" style="background-size:100% 11.3px;background-position:0 0.3px">and</span> <span class="h" style="background-size:100% 11.3px;background-position:0 0.3px">olive</span> <span class="h" style="background-size:100% 10.9px;background-position:0 2.5px">green.</span></div>
<div class="abs" style="left:201.3px;top:259.5px;width:35.0px;height:16.4px;background:#b0e2d0"></div>
<div class="abs" style="left:241.0px;top:259.5px;width:13.2px;height:15.4px;background:#b0e2d0"></div>
<div class="ln orig" style="left:201.5px;top:265.0px;font-size:10.5px;line-height:11.73px;"><span class="h" style="background-size:100% 11.4px;background-position:0 0.8px">S,</span> <span class="h" style="background-size:100% 11.4px;background-position:0 0.8px">M,</span> <span class="h" style="background-size:100% 11.4px;background-position:0 0.8px">L,</span> <span class="h" style="background-size:100% 9.6px;background-position:0 0.8px">XL</span></div>
<span class="ov" style="left:201.6px;top:258.2px;font-size:18.4px;line-height:20.59px;color:#1d8a38;transform:scaleX(0.649);opacity:1.0;-webkit-text-stroke:0.35px #1d8a38;font-weight:normal">S,M,L,</span>
<span class="ov" style="left:241.4px;top:258.2px;font-size:18.4px;line-height:20.59px;color:#1d8a38;transform:scaleX(0.585);opacity:1.0;-webkit-text-stroke:0.35px #1d8a38;font-weight:normal">XL</span>
<div class="ln " style="left:77.0px;top:332.1px;font-size:10.9px;line-height:12.18px;"><b><span class="h" style="background-size:100% 11.7px;background-position:0 0.9px">Tapered</span> <span class="h" style="background-size:100% 9.9px;background-position:0 0.9px">Fit</span> <span class="h" style="background-size:100% 11.7px;background-position:0 0.9px">Joggers</span></b></div>
<div class="ln " style="left:301.4px;top:332.1px;font-size:10.9px;line-height:12.18px;"><span class="h" style="background-size:100% 11.3px;background-position:0 0.3px">These</span> <span class="h" style="background-size:100% 11.3px;background-position:0 0.3px">modern</span> <span class="h" style="background-size:100% 13.1px;background-position:0 0.3px">joggers</span> <span class="h" style="background-size:100% 11.3px;background-position:0 0.3px">offer</span> <span class="h" style="background-size:100% 9.1px;background-position:0 2.5px">a</span> <span class="h" style="background-size:100% 11.3px;background-position:0 0.3px">sleek</span> <span class="h" style="background-size:100% 11.3px;background-position:0 0.3px">silhouette</span> <span class="h" style="background-size:100% 11.3px;background-position:0 0.3px">with</span> <span class="h" style="background-size:100% 13.1px;background-position:0 0.3px">tapered</span> <span class="h" style="background-size:100% 13.1px;background-position:0 0.3px">legs,</span></div>
<div class="ln " style="left:301.4px;top:350.8px;font-size:10.9px;line-height:12.18px;"><span class="h" style="background-size:100% 11.3px;background-position:0 0.3px">made</span> <span class="h" style="background-size:100% 11.3px;background-position:0 0.3px">from</span> <span class="h" style="background-size:100% 11.3px;background-position:0 0.3px">soft</span> <span class="h" style="background-size:100% 11.3px;background-position:0 0.3px">stretch</span> <span class="h" style="background-size:100% 11.3px;background-position:0 0.3px">fabric.</span> <span class="h" style="background-size:100% 11.3px;background-position:0 0.3px">Available</span> <span class="h" style="background-size:100% 11.3px;background-position:0 0.3px">in</span> <span class="h" style="background-size:100% 11.3px;background-position:0 0.3px">charcoal</span> <span class="h" style="background-size:100% 11.3px;background-position:0 0.3px">and</span> <span class="h" style="background-size:100% 10.9px;background-position:0 2.5px">navy.</span></div>
<div class="abs" style="left:201.1px;top:329.4px;width:8.7px;height:15.2px;background:#b0e2d0"></div>
<div class="abs" style="left:214.0px;top:329.4px;width:22.3px;height:15.2px;background:#b0e2d0"></div>
<div class="abs" style="left:241.0px;top:329.4px;width:13.2px;height:15.2px;background:#b0e2d0"></div>
<div class="ln orig" style="left:201.5px;top:334.5px;font-size:10.5px;line-height:11.73px;"><span class="h" style="background-size:100% 11.4px;background-position:0 0.8px">S,</span> <span class="h" style="background-size:100% 11.4px;background-position:0 0.8px">M,</span> <span class="h" style="background-size:100% 11.4px;background-position:0 0.8px">L,</span> <span class="h" style="background-size:100% 9.6px;background-position:0 0.8px">XL</span></div>
<span class="ov" style="left:201.6px;top:328.5px;font-size:17.6px;line-height:19.66px;color:#1d8a38;transform:scaleX(0.529);opacity:1.0;-webkit-text-stroke:0.35px #1d8a38;font-weight:normal">S,</span>
<span class="ov" style="left:214.4px;top:328.5px;font-size:17.6px;line-height:19.66px;color:#7a1d20;transform:scaleX(0.696);opacity:1.0;-webkit-text-stroke:0.35px #7a1d20;font-weight:normal">M</span>
<span class="ov" style="left:225.0px;top:328.5px;font-size:17.6px;line-height:19.66px;color:#d08a80;transform:scaleX(0.790);opacity:1.0;-webkit-text-stroke:0.1px #d08a80;font-weight:normal">L,</span>
<span class="ov" style="left:241.4px;top:328.5px;font-size:17.6px;line-height:19.66px;color:#1d8a38;transform:scaleX(0.613);opacity:1.0;-webkit-text-stroke:0.35px #1d8a38;font-weight:normal">XL</span>
<div class="ln " style="left:77.0px;top:383.2px;font-size:10.9px;line-height:12.18px;"><b><span class="h" style="background-size:100% 9.9px;background-position:0 0.9px">Merino</span> <span class="h" style="background-size:100% 9.9px;background-position:0 0.9px">Wool</span> <span class="h" style="background-size:100% 9.9px;background-position:0 0.9px">Sweater</span></b></div>
<div class="ln " style="left:301.4px;top:383.2px;font-size:10.9px;line-height:12.18px;"><span class="h" style="background-size:100% 11.3px;background-position:0 0.3px">A</span> <span class="h" style="background-size:100% 13.1px;background-position:0 0.3px">lightweight</span> <span class="h" style="background-size:100% 13.1px;background-position:0 0.3px">yet</span> <span class="h" style="background-size:100% 9.1px;background-position:0 2.5px">warm</span> <span class="h" style="background-size:100% 11.3px;background-position:0 0.3px">sweater</span> <span class="h" style="background-size:100% 11.3px;background-position:0 0.3px">made</span> <span class="h" style="background-size:100% 11.3px;background-position:0 0.3px">from</span> <span class="h" style="background-size:100% 11.3px;background-position:0 0.3px">100%</span> <span class="h" style="background-size:100% 11.3px;background-position:0 0.3px">merino</span> <span class="h" style="background-size:100% 13.1px;background-position:0 0.3px">wool,</span></div>
<div class="ln " style="left:301.4px;top:401.9px;font-size:10.9px;line-height:12.18px;"><span class="h" style="background-size:100% 13.1px;background-position:0 0.3px">featuring</span> <span class="h" style="background-size:100% 9.1px;background-position:0 2.5px">a</span> <span class="h" style="background-size:100% 9.1px;background-position:0 2.5px">crew</span> <span class="h" style="background-size:100% 11.3px;background-position:0 0.3px">neck.</span> <span class="h" style="background-size:100% 11.3px;background-position:0 0.3px">Perfect</span> <span class="h" style="background-size:100% 11.3px;background-position:0 0.3px">for</span> <span class="h" style="background-size:100% 13.1px;background-position:0 0.3px">layering</span> <span class="h" style="background-size:100% 9.1px;background-position:0 2.5px">or</span> <span class="h" style="background-size:100% 13.1px;background-position:0 0.3px">wearing</span> <span class="h" style="background-size:100% 9.1px;background-position:0 2.5px">on</span> <span class="h" style="background-size:100% 11.3px;background-position:0 0.3px">its</span> <span class="h" style="background-size:100% 9.1px;background-position:0 2.5px">own.</span></div>
<div class="abs" style="left:201.0px;top:380.6px;width:21.9px;height:15.9px;background:#b0e2d0"></div>
<div class="abs" style="left:227.6px;top:380.6px;width:12.6px;height:15.1px;background:#b0e2d0"></div>
<div class="ln orig" style="left:201.5px;top:385.6px;font-size:10.5px;line-height:11.73px;"><span class="h" style="background-size:100% 11.4px;background-position:0 0.8px">M,</span> <span class="h" style="background-size:100% 11.4px;background-position:0 0.8px">L,</span> <span class="h" style="background-size:100% 9.6px;background-position:0 0.8px">XL</span></div>
<span class="ov" style="left:201.4px;top:379.6px;font-size:17.6px;line-height:19.66px;color:#7a1d20;transform:scaleX(0.573);opacity:1.0;-webkit-text-stroke:0.35px #7a1d20;font-weight:normal">M,</span>
<span class="ov" style="left:214.4px;top:379.6px;font-size:17.6px;line-height:19.66px;color:#d08a80;transform:scaleX(0.668);opacity:1.0;-webkit-text-stroke:0.1px #d08a80;font-weight:normal">L,</span>
<span class="ov" style="left:228.0px;top:379.6px;font-size:17.6px;line-height:19.66px;color:#1d8a38;transform:scaleX(0.595);opacity:1.0;-webkit-text-stroke:0.35px #1d8a38;font-weight:normal">XL</span>
<div class="ln " style="left:77.0px;top:434.3px;font-size:10.9px;line-height:12.18px;"><b><span class="h" style="background-size:100% 9.9px;background-position:0 0.9px">Relaxed</span> <span class="h" style="background-size:100% 9.9px;background-position:0 0.9px">Fit</span> <span class="h" style="background-size:100% 11.7px;background-position:0 0.9px">Vintage</span></b></div>
<div class="ln " style="left:77.0px;top:453.0px;font-size:10.9px;line-height:12.18px;"><b><span class="h" style="background-size:100% 9.9px;background-position:0 0.9px">Jeans</span></b></div>
<div class="ln " style="left:301.4px;top:434.3px;font-size:10.9px;line-height:12.18px;"><span class="h" style="background-size:100% 13.1px;background-position:0 0.3px">Comfortable,</span> <span class="h" style="background-size:100% 11.3px;background-position:0 0.3px">relaxed</span> <span class="h" style="background-size:100% 11.3px;background-position:0 0.3px">fit</span> <span class="h" style="background-size:100% 13.1px;background-position:0 0.3px">jeans</span> <span class="h" style="background-size:100% 11.3px;background-position:0 0.3px">with</span> <span class="h" style="background-size:100% 9.1px;background-position:0 2.5px">a</span> <span class="h" style="background-size:100% 13.1px;background-position:0 0.3px">vintage</span> <span class="h" style="background-size:100% 11.3px;background-position:0 0.3px">wash.</span> <span class="h" style="background-size:100% 11.3px;background-position:0 0.3px">Ideal</span> <span class="h" style="background-size:100% 11.3px;background-position:0 0.3px">for</span></div>
<div class="ln " style="left:301.4px;top:453.0px;font-size:10.9px;line-height:12.18px;"><span class="h" style="background-size:100% 11.3px;background-position:0 0.3px">casual</span> <span class="h" style="background-size:100% 13.1px;background-position:0 0.3px">everyday</span> <span class="h" style="background-size:100% 9.1px;background-position:0 2.5px">wear.</span> <span class="h" style="background-size:100% 11.3px;background-position:0 0.3px">Available</span> <span class="h" style="background-size:100% 11.3px;background-position:0 0.3px">in</span> <span class="h" style="background-size:100% 13.1px;background-position:0 0.3px">light</span> <span class="h" style="background-size:100% 11.3px;background-position:0 0.3px">and</span> <span class="h" style="background-size:100% 11.3px;background-position:0 0.3px">dark</span> <span class="h" style="background-size:100% 11.3px;background-position:0 0.3px">blue.</span></div>
<div class="abs" style="left:201.0px;top:429.8px;width:8.8px;height:16.6px;background:#b0e2d0"></div>
<div class="abs" style="left:214.0px;top:429.8px;width:20.2px;height:16.2px;background:#b0e2d0"></div>
<div class="ln orig" style="left:201.5px;top:436.7px;font-size:10.5px;line-height:11.73px;"><span class="h" style="background-size:100% 11.4px;background-position:0 0.8px">S,</span> <span class="h" style="background-size:100% 11.4px;background-position:0 0.8px">M,</span> <span class="h" style="background-size:100% 9.6px;background-position:0 0.8px">L</span></div>
<span class="ov" style="left:201.6px;top:430.7px;font-size:17.6px;line-height:19.66px;color:#7a1d20;transform:scaleX(0.665);opacity:1.0;-webkit-text-stroke:0.35px #7a1d20;font-weight:normal">S</span>
<span class="ov" style="left:214.6px;top:430.7px;font-size:17.6px;line-height:19.66px;color:#7a1d20;transform:scaleX(0.682);opacity:1.0;-webkit-text-stroke:0.35px #7a1d20;font-weight:normal">M,L</span>
<div class="ln " style="left:77.0px;top:485.4px;font-size:10.9px;line-height:12.18px;"><b><span class="h" style="background-size:100% 9.9px;background-position:0 0.9px">Functional</span> <span class="h" style="background-size:100% 11.7px;background-position:0 0.9px">Utility</span></b></div>
<div class="ln " style="left:77.0px;top:504.1px;font-size:10.9px;line-height:12.18px;"><b><span class="h" style="background-size:100% 9.9px;background-position:0 0.9px">Vest</span></b></div>
<div class="ln " style="left:301.4px;top:485.4px;font-size:10.9px;line-height:12.18px;"><span class="h" style="background-size:100% 11.3px;background-position:0 0.3px">A</span> <span class="h" style="background-size:100% 11.3px;background-position:0 0.3px">functional</span> <span class="h" style="background-size:100% 11.3px;background-position:0 0.3px">and</span> <span class="h" style="background-size:100% 13.1px;background-position:0 0.3px">stylish</span> <span class="h" style="background-size:100% 11.3px;background-position:0 0.3px">vest</span> <span class="h" style="background-size:100% 11.3px;background-position:0 0.3px">with</span> <span class="h" style="background-size:100% 13.1px;background-position:0 0.3px">multiple</span> <span class="h" style="background-size:100% 13.1px;background-position:0 0.3px">pockets,</span> <span class="h" style="background-size:100% 11.3px;background-position:0 0.3px">made</span> <span class="h" style="background-size:100% 11.3px;background-position:0 0.3px">from</span></div>
<div class="ln " style="left:301.4px;top:504.1px;font-size:10.9px;line-height:12.18px;"><span class="h" style="background-size:100% 11.3px;background-position:0 0.3px">durable</span> <span class="h" style="background-size:100% 11.3px;background-position:0 0.3px">cotton</span> <span class="h" style="background-size:100% 9.1px;background-position:0 2.5px">canvas.</span> <span class="h" style="background-size:100% 11.3px;background-position:0 0.3px">Available</span> <span class="h" style="background-size:100% 11.3px;background-position:0 0.3px">in</span> <span class="h" style="background-size:100% 11.3px;background-position:0 0.3px">olive</span> <span class="h" style="background-size:100% 11.3px;background-position:0 0.3px">and</span> <span class="h" style="background-size:100% 11.3px;background-position:0 0.3px">khaki.</span></div>
<div class="abs" style="left:201.0px;top:482.8px;width:21.9px;height:15.9px;background:#b0e2d0"></div>
<div class="abs" style="left:227.6px;top:482.8px;width:12.6px;height:15.1px;background:#b0e2d0"></div>
<div class="ln orig" style="left:201.5px;top:487.8px;font-size:10.5px;line-height:11.73px;"><span class="h" style="background-size:100% 11.4px;background-position:0 0.8px">M,</span> <span class="h" style="background-size:100% 11.4px;background-position:0 0.8px">L,</span> <span class="h" style="background-size:100% 9.6px;background-position:0 0.8px">XL</span></div>
<span class="ov" style="left:201.4px;top:481.8px;font-size:17.6px;line-height:19.66px;color:#1d8a38;transform:scaleX(0.666);opacity:1.0;-webkit-text-stroke:0.35px #1d8a38;font-weight:normal">M,L,</span>
<span class="ov" style="left:228.0px;top:481.8px;font-size:17.6px;line-height:19.66px;color:#1d8a38;transform:scaleX(0.595);opacity:1.0;-webkit-text-stroke:0.35px #1d8a38;font-weight:normal">XL</span>
<div class="ln " style="left:77.0px;top:536.5px;font-size:10.9px;line-height:12.18px;"><b><span class="h" style="background-size:100% 9.9px;background-position:0 0.9px">Mock-Neck</span></b></div>
<div class="ln " style="left:77.0px;top:555.2px;font-size:10.9px;line-height:12.18px;"><b><span class="h" style="background-size:100% 9.9px;background-position:0 0.9px">Sweatshirt</span></b></div>
<div class="ln " style="left:301.4px;top:536.5px;font-size:10.9px;line-height:12.18px;"><span class="h" style="background-size:100% 11.3px;background-position:0 0.3px">A</span> <span class="h" style="background-size:100% 11.3px;background-position:0 0.3px">modern</span> <span class="h" style="background-size:100% 11.3px;background-position:0 0.3px">twist</span> <span class="h" style="background-size:100% 9.1px;background-position:0 2.5px">on</span> <span class="h" style="background-size:100% 11.3px;background-position:0 0.3px">the</span> <span class="h" style="background-size:100% 11.3px;background-position:0 0.3px">classic</span> <span class="h" style="background-size:100% 13.1px;background-position:0 0.3px">sweatshirt,</span> <span class="h" style="background-size:100% 13.1px;background-position:0 0.3px">featuring</span> <span class="h" style="background-size:100% 9.1px;background-position:0 2.5px">a</span> <span class="h" style="background-size:100% 11.3px;background-position:0 0.3px">mock-neck</span></div>
<div class="ln " style="left:301.4px;top:555.2px;font-size:10.9px;line-height:12.18px;"><span class="h" style="background-size:100% 13.1px;background-position:0 0.3px">design</span> <span class="h" style="background-size:100% 11.3px;background-position:0 0.3px">for</span> <span class="h" style="background-size:100% 11.3px;background-position:0 0.3px">added</span> <span class="h" style="background-size:100% 13.1px;background-position:0 0.3px">style</span> <span class="h" style="background-size:100% 11.3px;background-position:0 0.3px">and</span> <span class="h" style="background-size:100% 11.3px;background-position:0 0.3px">warmth.</span> <span class="h" style="background-size:100% 11.3px;background-position:0 0.3px">Available</span> <span class="h" style="background-size:100% 11.3px;background-position:0 0.3px">in</span> <span class="h" style="background-size:100% 10.9px;background-position:0 2.5px">gray</span> <span class="h" style="background-size:100% 11.3px;background-position:0 0.3px">and</span> <span class="h" style="background-size:100% 11.3px;background-position:0 0.3px">black.</span></div>
<div class="abs" style="left:201.0px;top:533.8px;width:23.6px;height:15.6px;background:#b0e2d0"></div>
<div class="abs" style="left:230.0px;top:533.8px;width:6.4px;height:15.6px;background:#b0e2d0"></div>
<div class="abs" style="left:241.0px;top:533.8px;width:13.2px;height:15.2px;background:#b0e2d0"></div>
<div class="ln orig" style="left:201.5px;top:538.9px;font-size:10.5px;line-height:11.73px;"><span class="h" style="background-size:100% 11.4px;background-position:0 0.8px">S,</span> <span class="h" style="background-size:100% 11.4px;background-position:0 0.8px">M,</span> <span class="h" style="background-size:100% 11.4px;background-position:0 0.8px">L,</span> <span class="h" style="background-size:100% 9.6px;background-position:0 0.8px">XL</span></div>
<span class="ov" style="left:201.6px;top:532.9px;font-size:17.6px;line-height:19.66px;color:#7a1d20;transform:scaleX(0.682);opacity:1.0;-webkit-text-stroke:0.35px #7a1d20;font-weight:normal">S</span>
<span class="ov" style="left:210.4px;top:532.9px;font-size:17.6px;line-height:19.66px;color:#d08a80;transform:scaleX(0.750);opacity:1.0;-webkit-text-stroke:0.1px #d08a80;font-weight:normal">M</span>
<span class="ov" style="left:230.2px;top:532.9px;font-size:17.6px;line-height:19.66px;color:#6a4a30;transform:scaleX(0.463);opacity:1.0;-webkit-text-stroke:0.1px #6a4a30;font-weight:normal">L,</span>
<span class="ov" style="left:241.4px;top:532.9px;font-size:17.6px;line-height:19.66px;color:#1d8a38;transform:scaleX(0.613);opacity:1.0;-webkit-text-stroke:0.35px #1d8a38;font-weight:normal">XL</span>
<div class="ln " style="left:77.0px;top:587.6px;font-size:10.9px;line-height:12.18px;"><b><span class="h" style="background-size:100% 9.9px;background-position:0 0.9px">Linen</span> <span class="h" style="background-size:100% 11.7px;background-position:0 0.9px">Button-Up</span></b></div>
<div class="ln " style="left:77.0px;top:606.3px;font-size:10.9px;line-height:12.18px;"><b><span class="h" style="background-size:100% 9.9px;background-position:0 0.9px">Shirt</span></b></div>
<div class="ln " style="left:301.4px;top:587.6px;font-size:10.9px;line-height:12.18px;"><span class="h" style="background-size:100% 11.3px;background-position:0 0.3px">A</span> <span class="h" style="background-size:100% 13.1px;background-position:0 0.3px">breathable,</span> <span class="h" style="background-size:100% 13.1px;background-position:0 0.3px">lightweight</span> <span class="h" style="background-size:100% 11.3px;background-position:0 0.3px">shirt</span> <span class="h" style="background-size:100% 11.3px;background-position:0 0.3px">made</span> <span class="h" style="background-size:100% 11.3px;background-position:0 0.3px">from</span> <span class="h" style="background-size:100% 13.1px;background-position:0 0.3px">premium</span> <span class="h" style="background-size:100% 11.3px;background-position:0 0.3px">linen.</span> <span class="h" style="background-size:100% 11.3px;background-position:0 0.3px">Perfect</span></div>
<div class="ln " style="left:301.4px;top:606.3px;font-size:10.9px;line-height:12.18px;"><span class="h" style="background-size:100% 11.3px;background-position:0 0.3px">for</span> <span class="h" style="background-size:100% 9.1px;background-position:0 2.5px">warm</span> <span class="h" style="background-size:100% 13.1px;background-position:0 0.3px">weather,</span> <span class="h" style="background-size:100% 11.3px;background-position:0 0.3px">available</span> <span class="h" style="background-size:100% 11.3px;background-position:0 0.3px">in</span> <span class="h" style="background-size:100% 13.1px;background-position:0 0.3px">white,</span> <span class="h" style="background-size:100% 13.1px;background-position:0 0.3px">sky</span> <span class="h" style="background-size:100% 13.1px;background-position:0 0.3px">blue,</span> <span class="h" style="background-size:100% 11.3px;background-position:0 0.3px">and</span> <span class="h" style="background-size:100% 13.1px;background-position:0 0.3px">beige.</span></div>
<div class="abs" style="left:201.3px;top:584.5px;width:35.0px;height:16.4px;background:#b0e2d0"></div>
<div class="abs" style="left:241.0px;top:584.5px;width:13.2px;height:15.4px;background:#b0e2d0"></div>
<div class="ln orig" style="left:201.5px;top:590.0px;font-size:10.5px;line-height:11.73px;"><span class="h" style="background-size:100% 11.4px;background-position:0 0.8px">S,</span> <span class="h" style="background-size:100% 11.4px;background-position:0 0.8px">M,</span> <span class="h" style="background-size:100% 11.4px;background-position:0 0.8px">L,</span> <span class="h" style="background-size:100% 9.6px;background-position:0 0.8px">XL</span></div>
<span class="ov" style="left:201.6px;top:583.2px;font-size:18.4px;line-height:20.59px;color:#1d8a38;transform:scaleX(0.649);opacity:1.0;-webkit-text-stroke:0.35px #1d8a38;font-weight:normal">S,M,L,</span>
<span class="ov" style="left:241.4px;top:583.2px;font-size:18.4px;line-height:20.59px;color:#1d8a38;transform:scaleX(0.585);opacity:1.0;-webkit-text-stroke:0.35px #1d8a38;font-weight:normal">XL</span>
<div class="ln " style="left:77.0px;top:638.7px;font-size:10.9px;line-height:12.18px;"><b><span class="h" style="background-size:100% 9.9px;background-position:0 0.9px">Comfortable</span> <span class="h" style="background-size:100% 9.9px;background-position:0 0.9px">Suede</span></b></div>
<div class="ln " style="left:77.0px;top:657.4px;font-size:10.9px;line-height:12.18px;"><b><span class="h" style="background-size:100% 9.9px;background-position:0 0.9px">Desert</span> <span class="h" style="background-size:100% 9.9px;background-position:0 0.9px">Boots</span></b></div>
<div class="ln " style="left:301.4px;top:638.7px;font-size:10.9px;line-height:12.18px;"><span class="h" style="background-size:100% 13.1px;background-position:0 0.3px">Stylish</span> <span class="h" style="background-size:100% 11.3px;background-position:0 0.3px">and</span> <span class="h" style="background-size:100% 11.3px;background-position:0 0.3px">soft</span> <span class="h" style="background-size:100% 11.3px;background-position:0 0.3px">desert</span> <span class="h" style="background-size:100% 11.3px;background-position:0 0.3px">boots</span> <span class="h" style="background-size:100% 11.3px;background-position:0 0.3px">crafted</span> <span class="h" style="background-size:100% 11.3px;background-position:0 0.3px">for</span> <span class="h" style="background-size:100% 13.1px;background-position:0 0.3px">everyday</span> <span class="h" style="background-size:100% 9.1px;background-position:0 2.5px">wear.</span></div>
<div class="abs" style="left:201.0px;top:636.1px;width:21.9px;height:15.9px;background:#b0e2d0"></div>
<div class="abs" style="left:227.6px;top:636.1px;width:12.6px;height:15.1px;background:#b0e2d0"></div>
<div class="ln orig" style="left:201.5px;top:641.1px;font-size:10.5px;line-height:11.73px;"><span class="h" style="background-size:100% 11.4px;background-position:0 0.8px">M,</span> <span class="h" style="background-size:100% 11.4px;background-position:0 0.8px">L,</span> <span class="h" style="background-size:100% 9.6px;background-position:0 0.8px">XL</span></div>
<span class="ov" style="left:201.4px;top:635.1px;font-size:17.6px;line-height:19.66px;color:#1d8a38;transform:scaleX(0.666);opacity:1.0;-webkit-text-stroke:0.35px #1d8a38;font-weight:normal">M,L,</span>
<span class="ov" style="left:228.0px;top:635.1px;font-size:17.6px;line-height:19.66px;color:#1d8a38;transform:scaleX(0.595);opacity:1.0;-webkit-text-stroke:0.35px #1d8a38;font-weight:normal">XL</span>
</div></div>
<div id="rvs"><div class="thumb" style="left:4px;top:28px;width:9px;height:491px"></div>
<div class="arr" style="left:4px;top:6px;border-left:4.6px solid transparent;border-right:4.6px solid transparent;border-bottom:5.2px solid #82828e"></div>
<div class="arr" style="left:4px;top:675px;border-left:4.6px solid transparent;border-right:4.6px solid transparent;border-top:5.2px solid #82828e"></div></div>
<div class="abs" style="left:1px;top:80px;width:1px;height:683px;background:#7a7a7a"></div>
<div id="frame"></div>
</body></html>
